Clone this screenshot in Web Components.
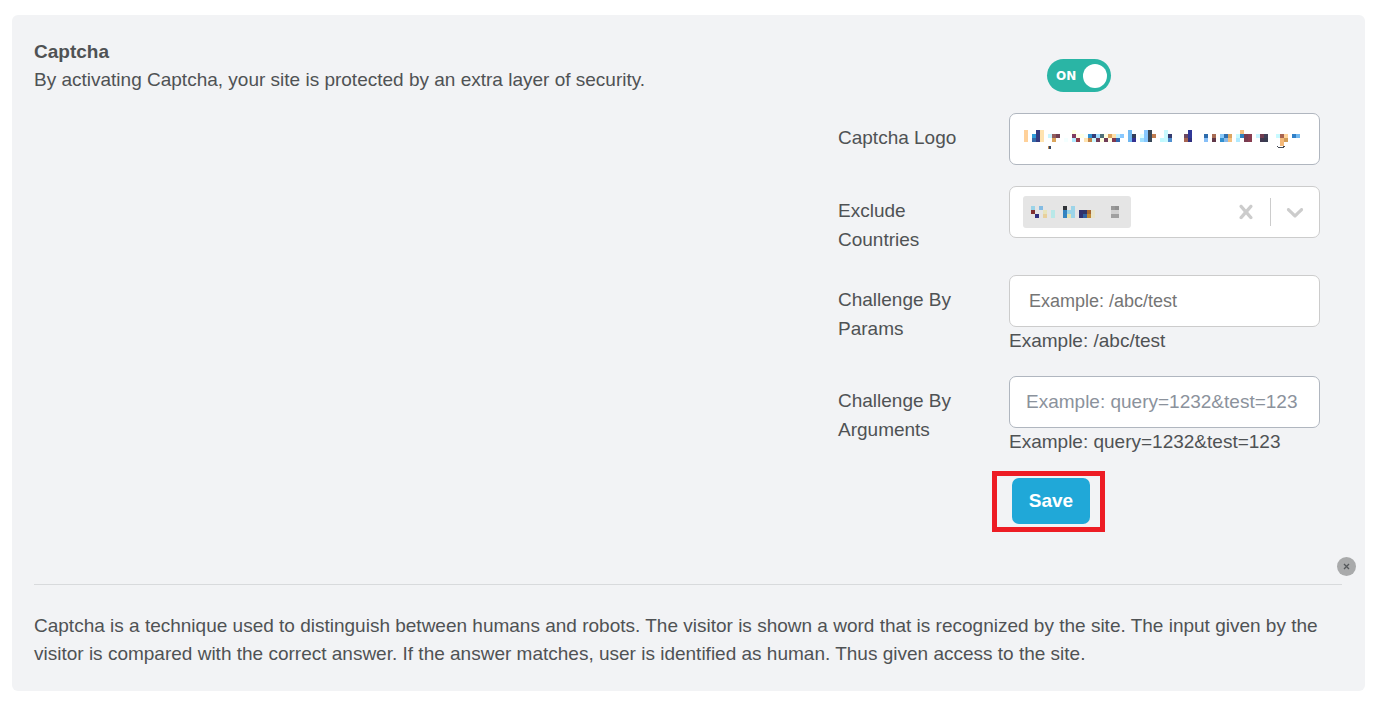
<!DOCTYPE html>
<html lang="en">
<head>
<meta charset="utf-8">
<meta name="viewport" content="width=device-width, initial-scale=1">
<title>Captcha settings</title>
<style>
  body { margin: 15px 14px 13px 12px; background: #fff; color: #4f5254; font: 19px/28px "Liberation Sans", Arial, sans-serif; }
</style>
</head>
<body>
<settings-card>
  <h2 slot="title">Captcha</h2>
  <span slot="intro">By activating Captcha, your site is protected by an extra layer of security.</span>
  <captcha-form slot="form"></captcha-form>
  <span slot="note">Captcha is a technique used to distinguish between humans and robots. The visitor is shown a word that is recognized by the site. The input given by the visitor is compared with the correct answer. If the answer matches, user is identified as human. Thus given access to the site.</span>
</settings-card>

<script>
const define = (name, markup, setup) => {
  const template = document.createElement('template');
  template.innerHTML = markup;
  customElements.define(name, class extends HTMLElement {
    constructor() {
      super();
      this.attachShadow({ mode: 'open' }).append(template.content.cloneNode(true));
    }
    connectedCallback() { if (setup) setup(this, this.shadowRoot); }
  });
};

/* Obscured values: column:row:colour, in four-pixel cells. */
const MOSAICS = {
  logo: { cols: 70, rows: 5, extra: '<path d="M24 16h1v3h-1z" fill="#bd8a55"/><path d="M25 16h2v3h-2z" fill="#344462"/><path d="M253 16q4 4 8 0" fill="none" stroke="#454b55" stroke-width="1"/>', cells:
   '0:012:ffd19a 2:1:2e9bd8 2:2:3568a8 3:012:343a80 4:012:ffe3b0 6:1:c8f4ff 7:1:935c5c 7:2:dba55c 8:1:6f3f52 10:2:f4ffff 12:0:ffffe0 12:1:803c60 12:2:b0eaff 13:1:ffffe4 13:2:903848 14:1:ffffe4 15:1:f4ffff 15:2:ffe3b0 16:1:3090d0 16:2:c08448 17:1:343c78 17:2:c8f8ff 18:1:a0dcff 18:2:703c58 19:1:507078 19:2:ffffe0 20:1:ffffe0 20:2:703c58 21:1:dba05c 21:2:ffffe4 22:1:ffe0a8 22:2:803850 23:1:c0f0ff 23:2:3068b0 24:1:88c8ff 26:012:70b8f0 27:1:343c58 27:2:343090 29:1:e0ffff 29:2:a0e0ff 30:012:88c8ff 31:012:384858 32:1:c07c50 34:2:c0faff 35:012:c8faff 36:1:343c70 36:2:5090d0 40:1:6c4860 40:2:a86450 41:01:303898 41:2:303080 45:1:2e6cac 45:2:88c0f8 47:1:a86c54 47:2:603848 49:1:88c8f8 49:2:3090d0 50:1:3070b0 50:2:88b8e8 51:1:dba460 51:2:f4c080 53:1:c8faff 53:2:b0eaff 54:0:f4c080 54:1:2e80c0 55:12:783c50 56:12:883c50 58:1:c8f4ff 59:1:703c50 59:2:403850 60:1:404058 60:2:383c50 63:1:c8faff 64:1:a86450 64:23:f4b878 65:1:ffd49a 65:2:d09c58 67:1:3080c8 68:1:70b8f0' },
  country: { cols: 22, rows: 3, extra: '', cells:
   '0:0:9cd4e8 0:1:803030 1:2:303080 2:0:84bce4 3:1:e8e4bc 3:2:e8d09c 5:12:b8e8e8 8:0:303438 8:12:3484c0 9:1:9cd4e8 9:2:e8e4b4 10:012:9cd4e8 12:12:303070 13:1:303468 13:2:3060a0 14:1:a46430 14:2:c08830 15:12:e8e4cc 20:0:989898 20:1:d0d0d0 20:2:a0a0a0 21:0:909090 21:1:d0d0d0 21:2:a0a0a0' }
};

define('pixel-mosaic', `
<style>
  :host { display: block; line-height: 0; }
  svg { display: block; }
</style>`, (host, root) => {
  const m = MOSAICS[host.getAttribute('pattern')];
  let cells = '';
  for (const cell of m.cells.split(' ')) {
    const [col, rows, colour] = cell.split(':');
    for (const row of rows) cells += `<rect x="${col * 4}" y="${row * 4}" width="4" height="4" fill="#${colour}"/>`;
  }
  root.innerHTML += `<svg width="${m.cols * 4}" height="${m.rows * 4}" shape-rendering="crispEdges" aria-hidden="true">${cells}${m.extra}</svg>`;
});

define('toggle-switch', `
<style>
  :host { display: block; }
  label { position: relative; display: flex; align-items: center; justify-content: space-between; box-sizing: border-box; width: 64px; height: 33px; padding: 0 4px 0 9px; border-radius: 17px; background: #2ab5a5; color: #fff; font: bold 12px/16px "DejaVu Sans", sans-serif; cursor: pointer; }
  input { position: absolute; inset: 0; width: 100%; height: 100%; margin: 0; opacity: 0; }
  i { width: 24px; height: 24px; border-radius: 50%; background: #fff; }
</style>
<label><input type="checkbox" role="switch" aria-label="Captcha" checked><span>ON</span><i></i></label>`);

define('form-field', `
<style>
  :host { display: grid; grid-template-columns: minmax(0, 171fr) minmax(0, 311fr); align-items: start; }
  label { padding: 10px 30px 0 0; line-height: 29px; }
  .box { position: relative; }
  input { display: block; box-sizing: border-box; width: 100%; height: 52px; padding: 0 16px; border: 1px solid #b0b6bf; border-radius: 7px; background: #fff; color: inherit; font: inherit; outline: 0; }
  input::placeholder { color: #8b929c; opacity: 1; }
  :host([compact]) input { padding: 0 19px; border-color: #ccc; font-size: 18px; }
  :host([compact]) input::placeholder { color: #757575; }
  .cover { position: absolute; left: 15px; top: 17px; pointer-events: none; }
  .hint { line-height: 28px; white-space: nowrap; }
  .hint:empty { display: none; }
</style>
<label for="control"></label>
<div><div class="box"><input id="control" type="text"><div class="cover"><slot></slot></div></div><div class="hint"></div></div>`,
(host, root) => {
  root.querySelector('label').textContent = host.getAttribute('label');
  root.querySelector('input').placeholder = host.getAttribute('placeholder') || '';
  root.querySelector('.hint').textContent = host.getAttribute('hint') || '';
});

define('multi-select', `
<style>
  :host { display: grid; grid-template-columns: minmax(0, 171fr) minmax(0, 311fr); align-items: start; }
  label { padding: 10px 30px 0 0; line-height: 29px; }
  .box { display: flex; align-items: center; box-sizing: border-box; height: 52px; padding: 0 10px 0 13px; border: 1px solid #ccc; border-radius: 7px; background: #fff; }
  .chip { display: flex; flex: none; align-items: center; box-sizing: border-box; width: 108px; height: 32px; padding: 0 8px; border-radius: 3px; background: #e5e5e5; }
  input { flex: 1; min-width: 0; width: 0; height: 32px; padding: 0; border: 0; background: none; font: inherit; outline: 0; }
  button { display: block; padding: 0; border: 0; background: none; color: #ccc; }
  svg { display: block; }
  hr { width: 1px; height: 28px; margin: 0 10px; border: 0; background: #ccc; }
</style>
<label for="search"></label>
<div class="box">
  <span class="chip"><slot></slot></span>
  <input id="search" type="text" role="combobox" aria-expanded="false">
  <button type="button" aria-label="Clear"><svg width="28" height="28" viewBox="0 0 20 20" fill="currentColor"><path d="M14.348 14.849c-0.469 0.469-1.229 0.469-1.697 0l-2.651-3.030-2.651 3.029c-0.469 0.469-1.229 0.469-1.697 0-0.469-0.469-0.469-1.229 0-1.697l2.758-3.15-2.759-3.152c-0.469-0.469-0.469-1.228 0-1.697s1.228-0.469 1.697 0l2.652 3.031 2.651-3.031c0.469-0.469 1.228-0.469 1.697 0s0.469 1.229 0 1.697l-2.758 3.152 2.758 3.15c0.469 0.469 0.469 1.229 0 1.698z"/></svg></button>
  <hr>
  <button type="button" aria-label="Open list"><svg width="28" height="28" viewBox="0 0 20 20" fill="currentColor"><path d="M4.516 7.548c0.436-0.446 1.043-0.481 1.576 0l3.908 3.747 3.908-3.747c0.533-0.481 1.141-0.446 1.574 0 0.436 0.445 0.408 1.197 0 1.615-0.406 0.418-4.695 4.502-4.695 4.502-0.217 0.223-0.502 0.335-0.787 0.335s-0.57-0.112-0.789-0.335c0 0-4.287-4.084-4.695-4.502s-0.436-1.17 0-1.615z"/></svg></button>
</div>`, (host, root) => { root.querySelector('label').textContent = host.getAttribute('label'); });

define('save-action', `
<style>
  :host { display: block; box-sizing: border-box; padding: 2px 10px 3px 15px; border: 5px solid #ed1c24; }
  button { display: block; width: 78px; height: 46px; padding: 0; border: 0; border-radius: 7px; background: #20a8d8; color: #fff; font: bold 19px/28px "Liberation Sans", Arial, sans-serif; cursor: pointer; }
</style>
<button type="submit"><slot></slot></button>`);

define('captcha-form', `
<style>
  :host { display: block; }
  form { display: flex; flex-direction: column; gap: 21px; margin: 0; padding: 21px 22px 0 0; }
  .row { display: grid; grid-template-columns: minmax(0, 171fr) minmax(0, 311fr); }
  .row > * { grid-column: 2; justify-self: start; }
  toggle-switch { margin-left: 38px; }
  .actions { margin-top: -6px; }
  save-action { margin-left: -17px; }
</style>
<form onsubmit="return false">
  <div class="row"><toggle-switch></toggle-switch></div>
  <form-field label="Captcha Logo"><pixel-mosaic pattern="logo"></pixel-mosaic></form-field>
  <multi-select label="Exclude Countries"><pixel-mosaic pattern="country"></pixel-mosaic></multi-select>
  <form-field compact label="Challenge By Params" placeholder="Example: /abc/test" hint="Example: /abc/test"></form-field>
  <form-field label="Challenge By Arguments" placeholder="Example: query=1232&amp;test=123" hint="Example: query=1232&amp;test=123"></form-field>
  <div class="row actions"><save-action>Save</save-action></div>
</form>`);

define('settings-card', `
<style>
  :host { display: block; padding: 23px 23px 23px 22px; border-radius: 6px; background: #f2f3f5; }
  .top { display: grid; grid-template-columns: minmax(0, 804fr) minmax(0, 504fr); }
  ::slotted(h2) { margin: 0; font-size: 19px; line-height: 28px; }
  ::slotted(span) { display: block; }
  .divider { position: relative; margin: 52px 0 27px; border-top: 1px solid #d8dadc; }
  .divider button { position: absolute; right: -14px; bottom: 9px; display: grid; place-items: center; width: 19px; height: 19px; padding: 0; border: 0; border-radius: 50%; background: #a9aaab; color: #55585b; }
</style>
<div class="top">
  <div><slot name="title"></slot><slot name="intro"></slot></div>
  <slot name="form"></slot>
</div>
<div class="divider"><button type="button" aria-label="Close"><svg width="7" height="7" viewBox="0 0 7 7" fill="none" stroke="currentColor" stroke-width="1.3"><path d="M1 1l5 5M6 1L1 6"/></svg></button></div>
<slot name="note"></slot>`);
</script>
</body>
</html>
